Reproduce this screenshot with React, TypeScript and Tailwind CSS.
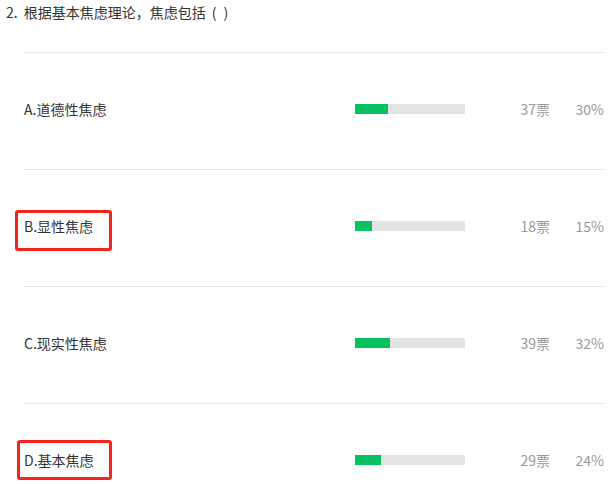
import React from "react";

type Option = {
  label: string;
  votes: number;
  percent: number;
  marked?: "b" | "d";
};

const options: Option[] = [
  { label: "A.道德性焦虑", votes: 37, percent: 30 },
  { label: "B.显性焦虑", votes: 18, percent: 15, marked: "b" },
  { label: "C.现实性焦虑", votes: 39, percent: 32 },
  { label: "D.基本焦虑", votes: 29, percent: 24, marked: "d" },
];

const OptionRow = ({ opt }: { opt: Option }) => {
  return (
    <div className="flex items-center h-[117px] pb-[4px] border-t border-[#e8e8e8]">
      <div className="relative flex-1 pl-[1px] text-[14px] leading-[20px] text-[#333]">
        {opt.marked === "b" && (
          <div className="absolute left-[-8px] top-[-6px] w-[97px] h-[41px] border-[3px] border-[#f5231b] rounded-[3px]" />
        )}
        {opt.marked === "d" && (
          <div className="absolute left-[-6px] top-[-10px] w-[95px] h-[40px] border-[3px] border-[#f5231b] rounded-[3px]" />
        )}
        <span className="relative">{opt.label}</span>
      </div>
      <div className="w-[110px] h-[10px] mr-[2px] bg-[#e3e3e3]">
        <div
          className="h-full bg-[#07c160]"
          style={{ width: `${opt.percent}%` }}
        />
      </div>
      <div className="w-[83px] text-right text-[14px] text-[#999]">
        {opt.votes}票
      </div>
      <div className="w-[55px] pr-[1px] text-right text-[14px] text-[#999]">
        {opt.percent}%
      </div>
    </div>
  );
};

export default function App() {
  return (
    <div
      className="w-[616px] h-[484px] bg-white overflow-hidden"
      style={{ fontFamily: '"Noto Sans CJK SC", "Liberation Sans", sans-serif' }}
    >
      <div className="h-[52px] pl-[6px] pt-[2px] text-[14px] text-[#333]">
        2.<span className="ml-[6px]">根据基本焦虑理论，焦虑包括</span>
        <span className="inline-block ml-[6px]">(</span>
        <span className="inline-block ml-[7px]">)</span>
      </div>
      <div className="ml-[23px] mr-[11px]">
        {options.map((opt) => (
          <OptionRow key={opt.label} opt={opt} />
        ))}
      </div>
    </div>
  );
}
